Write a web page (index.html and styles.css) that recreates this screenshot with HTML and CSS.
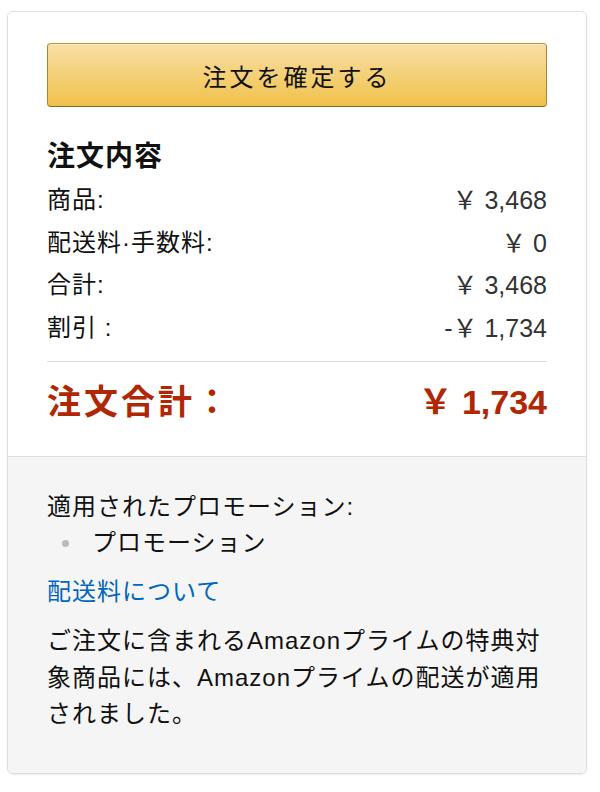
FILE: index.html
```html
<!doctype html>
<html lang="ja">
	<head>
		<meta charset="utf-8" />
		<meta name="viewport" content="width=device-width,initial-scale=1" />
		<title>注文内容</title>
		<link rel="stylesheet" href="styles.css">
	</head>
	<body>
		<div class="page">
			<section class="summary">
				<div class="summary__main">
					<button type="button" class="place-order">注文を確定する</button>

					<h2 class="summary__title">注文内容</h2>
					<dl class="lines">
						<div class="line">
							<dt>商品:</dt>
							<dd>￥ 3,468</dd>
						</div>
						<div class="line">
							<dt>配送料·手数料:</dt>
							<dd>￥ 0</dd>
						</div>
						<div class="line">
							<dt>合計:</dt>
							<dd>￥ 3,468</dd>
						</div>
						<div class="line">
							<dt>割引 :</dt>
							<dd>-￥ 1,734</dd>
						</div>
					</dl>

					<div class="total">
						<span class="total__label">注文合計：</span>
						<span class="total__value">￥ 1,734</span>
					</div>
				</div>

				<div class="summary__notes">
					<p class="promo-title">適用されたプロモーション:</p>
					<ul class="promo-list">
						<li><span class="promo-list__dot"></span>プロモーション</li>
					</ul>
					<p><a href="#" class="shipping-link">配送料について</a></p>
					<p class="prime-note">ご注文に含まれるAmazonプライムの特典対象商品には、Amazonプライムの配送が適用されました。</p>
				</div>
			</section>
		</div>
	</body>
</html>
```

FILE: styles.css
```css
body {
	margin: 0;
	background: #fff;
	color: #111;
	font-family: "Liberation Sans", "Noto Sans CJK JP", sans-serif;
	font-size: 24px;
}

.page {
	padding: 11px 13px 20px 7px;
}

.summary {
	border: 1px solid #ddd;
	border-radius: 6px;
	overflow: hidden;
	box-shadow: 0 1px 2px rgba(0, 0, 0, 0.08);
}

.summary__main {
	padding: 31px 39px 30px;
	background: #fff;
}

.place-order {
	display: block;
	box-sizing: border-box;
	inline-size: 100%;
	block-size: 64px;
	margin: 0;
	padding: 0;
	border: 1px solid;
	border-color: #b9983f #a88734 #846a29;
	border-radius: 4px;
	background: linear-gradient(to bottom, #f7dfa5, #f0c14b);
	box-shadow: inset 0 1px 0 rgba(255, 255, 255, 0.4);
	color: #111;
	font: inherit;
	font-size: 24px;
	letter-spacing: 3px;
	cursor: pointer;
}

.summary__title {
	margin: 30px 0 2px;
	font-size: 28px;
	font-weight: 700;
	line-height: 40px;
	letter-spacing: 1px;
}

.lines {
	margin: 0;
}

.line {
	display: flex;
	justify-content: space-between;
	line-height: 42.5px;
	letter-spacing: 1px;

	& dd {
		margin: 0;
		color: #333;
		font-size: 25px;
		letter-spacing: 0;
	}
}

.total {
	display: flex;
	justify-content: space-between;
	align-items: center;
	margin-top: 12px;
	padding-top: 16px;
	border-top: 1px solid #ddd;
	block-size: 48px;
	color: #b12704;
	font-size: 34px;
	font-weight: 700;
	line-height: 48px;
}

.total__label {
	letter-spacing: 3px;
}

.summary__notes {
	padding: 32px 39px 40px;
	border-top: 1px solid #ddd;
	background: #f5f5f5;
	line-height: 36px;

	& p {
		margin: 0;
	}
}

.promo-title {
	letter-spacing: 1px;
}

.promo-list {
	margin: 0 0 13px;
	padding: 0;
	list-style: none;

	& li {
		display: flex;
		align-items: center;
		gap: 23px;
		padding-left: 15px;
		letter-spacing: 1px;
	}
}

.promo-list__dot {
	inline-size: 7px;
	block-size: 7px;
	border-radius: 50%;
	background: #bbb;
}

.shipping-link {
	color: #0066c0;
	text-decoration: none;
	letter-spacing: 1px;
}

.prime-note {
	margin-top: 13px !important;
	line-height: 36.5px;
	letter-spacing: 1px;
}
```
